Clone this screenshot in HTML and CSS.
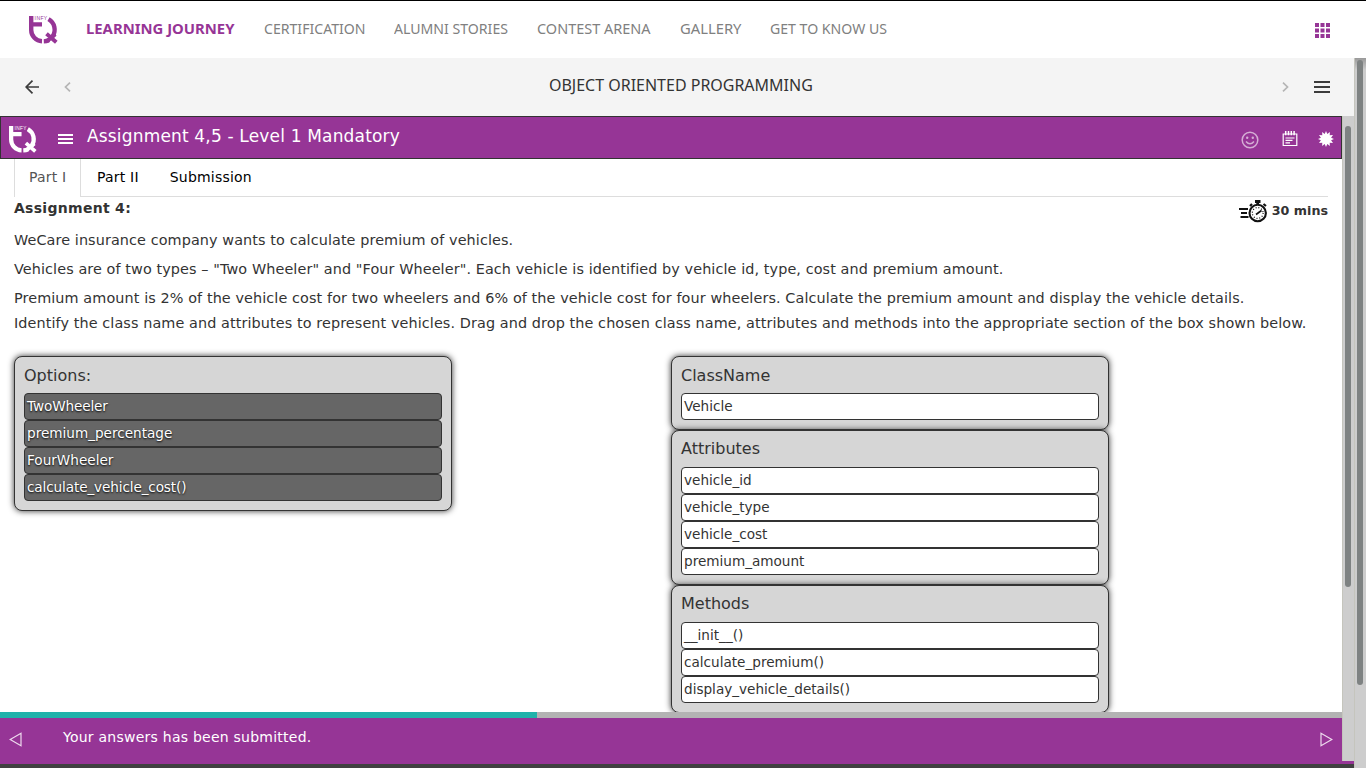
FILE: index.html
```html
<!DOCTYPE html>
<html lang="en">
<head>
<meta charset="utf-8">
<title>Object Oriented Programming</title>
<link rel="stylesheet" href="styles.css">
</head>
<body>
<header class="top">
  <svg class="logo" viewBox="0 0 29 28"><g fill="none" stroke="currentColor"><path d="M2.200 0V14A11.200 11.200 0 0 0 13 25.200M3 8.400H13" stroke-width="4.400"/><path d="M19.500 3.200A12 12 0 0 1 23.500 20.500M20 24Q17.500 25.300 14.800 25.400" stroke-width="4.400"/><path d="M17.500 17.800L27.300 26.300M26.300 18.200L18 25.200" stroke-width="3.900"/></g><text x="5.600" y="4.300" font-size="5" letter-spacing=".4">INFY</text></svg>
  <nav class="nav">
    <a class="active"><span>LEARNING JOURNEY</span></a><a class="n2"><span>CERTIFICATION</span></a><a class="n3"><span>ALUMNI STORIES</span></a><a class="n4"><span>CONTEST ARENA</span></a><a class="n5"><span>GALLERY</span></a><a class="n6"><span>GET TO KNOW US</span></a>
  </nav>
  <svg class="apps" viewBox="0 0 15 15"><path fill="#963596" d="M0 0h4v4H0zM5.500 0h4v4h-4zM11 0h4v4h-4zM0 5.500h4v4H0zM5.500 5.500h4v4h-4zM11 5.500h4v4h-4zM0 11h4v4H0zM5.500 11h4v4h-4zM11 11h4v4h-4z"/></svg>
</header>
<div class="outer">
  <main class="page">
    <div class="course">
      <svg class="back" viewBox="0 0 14 14"><path d="M14 7H1M7.500.7L1.200 7l6.300 6.300" fill="none" stroke="#3c3c3c" stroke-width="1.700"/></svg>
      <svg class="prev" viewBox="0 0 7 10"><path d="M6 .6L1.500 5 6 9.400" fill="none" stroke="#b5b5b5" stroke-width="1.700"/></svg>
      <h1><span>OBJECT ORIENTED PROGRAMMING</span></h1>
      <svg class="next" viewBox="0 0 7 10"><path d="M1 .6L5.500 5 1 9.400" fill="none" stroke="#b5b5b5" stroke-width="1.700"/></svg>
      <svg class="menu" viewBox="0 0 16 12"><path d="M0 1h16M0 6h16M0 11h16" stroke="#3c3c3c" stroke-width="1.800"/></svg>
    </div>
    <div class="frame">
      <div class="lesson">
        <div class="bar">
          <svg class="logo logo2" viewBox="0 0 29 28"><g fill="none" stroke="currentColor"><path d="M2.200 0V14A11.200 11.200 0 0 0 13 25.200M3 8.400H13" stroke-width="4.400"/><path d="M19.500 3.200A12 12 0 0 1 23.500 20.500M20 24Q17.500 25.300 14.800 25.400" stroke-width="4.400"/><path d="M17.500 17.800L27.300 26.300M26.300 18.200L18 25.200" stroke-width="3.900"/></g><text x="5.600" y="4.300" font-size="5" letter-spacing=".4">INFY</text></svg>
          <svg class="burger" viewBox="0 0 15 10"><path d="M0 1h15M0 5h15M0 9h15" stroke="#fff" stroke-width="1.800"/></svg>
          <h2>Assignment 4,5 - Level 1 Mandatory</h2>
          <svg class="smile" viewBox="0 0 18 18"><g fill="none" stroke="#d5aed5" stroke-width="1.500"><circle cx="9" cy="9" r="7.800"/><path d="M5 10.500q4 4.500 8 0"/></g><g fill="#d5aed5"><circle cx="6.200" cy="6.800" r="1.200"/><circle cx="11.800" cy="6.800" r="1.200"/></g></svg>
          <svg class="note" viewBox="0 0 16 16"><path d="M1.200 3h13.600v11.500H1.200zM3.500 7h9M3.500 9.400h7M3.500 11.800h4.500" fill="none" stroke="#fff" stroke-width="1.200"/><path d="M3.700 0v4.300M6.500 0v4.300M9.300 0v4.300M12.100 0v4.300" stroke="#fff" stroke-width="1.500"/></svg>
          <svg class="star" viewBox="0 0 16 16"><path fill="#fff" d="M8 0L9.300 2.900 11.900 1 11.700 4.300 15 4.100 13.100 6.700 16 8 13.100 9.300 15 11.900 11.700 11.700 11.900 15 9.300 13.100 8 16 6.700 13.100 4.100 15 4.300 11.700 1 11.900 2.900 9.300 0 8 2.900 6.700 1 4.100 4.300 4.300 4.100 1 6.700 2.900z"/></svg>
        </div>
        <div class="content">
          <div class="tabs"><a class="on">Part I</a><a>Part II</a><a class="t3">Submission</a></div>
          <div class="heading"><strong>Assignment 4:</strong>
            <div class="time"><svg viewBox="0 0 28 23"><g fill="none" stroke="#111"><path d="M0 9h9M2 13h6M1.500 17h8" stroke-width="1.900"/><circle cx="18.700" cy="13" r="8.200" stroke-width="2.100"/><path d="M16 1.500h5.500M18.700 1v4" stroke-width="2.800"/><path d="M11 6l2-2M24.500 4l2.500 2" stroke-width="2.200"/><circle cx="18.700" cy="13" r="5.400" stroke-width="1.300" stroke-dasharray="1 1.830"/><path d="M17 14.500l5.500-4" stroke-width="1.700"/></g></svg><b>30 mins</b></div>
          </div>
          <p>WeCare insurance company wants to calculate premium of vehicles.</p>
          <p>Vehicles are of two types – "Two Wheeler" and "Four Wheeler". Each vehicle is identified by vehicle id, type, cost and premium amount.</p>
          <p class="tight">Premium amount is 2% of the vehicle cost for two wheelers and 6% of the vehicle cost for four wheelers. Calculate the premium amount and display the vehicle details.</p>
          <p>Identify the class name and attributes to represent vehicles. Drag and drop the chosen class name, attributes and methods into the appropriate section of the box shown below.</p>
          <div class="cols">
            <div class="col">
              <section class="box dark"><h3>Options:</h3><ul><li>TwoWheeler</li><li>premium_percentage</li><li>FourWheeler</li><li>calculate_vehicle_cost()</li></ul></section>
            </div>
            <div class="col">
              <section class="box"><h3>ClassName</h3><ul><li>Vehicle</li></ul></section>
              <section class="box second"><h3>Attributes</h3><ul><li>vehicle_id</li><li>vehicle_type</li><li>vehicle_cost</li><li>premium_amount</li></ul></section>
              <section class="box second"><h3>Methods</h3><ul><li>__init__()</li><li>calculate_premium()</li><li>display_vehicle_details()</li></ul></section>
            </div>
          </div>
        </div>
        <div class="progress"><div style="width:537px"></div></div>
        <footer>
          <svg class="fl" viewBox="0 0 13 15"><path d="M12 1.200v12.600L1.200 7.500z" fill="none" stroke="#edd9ed" stroke-width="1.200"/></svg>
          <span>Your answers has been submitted.</span>
          <svg class="fr" viewBox="0 0 13 15"><path d="M1 1.200v12.600L11.800 7.500z" fill="none" stroke="#edd9ed" stroke-width="1.200"/></svg>
        </footer>
      </div>
      <div class="scroll inner"><div></div></div>
    </div>
    <div class="under"></div>
    <div class="end"></div>
  </main>
  <div class="scroll outerbar"><div></div></div>
</div>
</body>
</html>
```
FILE: styles.css
```css
* { box-sizing: border-box; }
body { margin: 0; width: 1366px; height: 768px; overflow: hidden; background: #fff; color: #333; font-family: "DejaVu Sans", sans-serif; }
svg { flex: none; display: block; }
h1, h2, h3, p, ul { margin: 0; padding: 0; font-weight: 400; }
.top { height: 58px; border-top: 1px solid #000; display: flex; align-items: flex-start; padding-left: 29px; }
.logo { width: 29px; height: 28px; margin-top: 15px; color: #963596; }
.logo text { font-family: "Liberation Sans", sans-serif; fill: currentColor; }
.nav { display: flex; margin-left: 28px; padding-top: 16px; font: 15px/22px "Noto Sans", sans-serif; color: #808080; }
.nav a { white-space: nowrap; width: 178px; }
.nav span, h1 span { display: inline-block; transform-origin: 0 50%; transform: scaleX(.94); }
.nav .active { color: #963596; font-weight: 700; }
.nav .active span { transform: scaleX(.99); }
.nav .n2 { width: 130px; }
.nav .n3 { width: 143px; }
.nav .n4 { width: 143px; }
.nav .n4 span { transform: scaleX(.965); }
.nav .n5 { width: 90px; }
.nav .n5 span { transform: scaleX(.985); }
.nav .n6 { width: 130px; }
.apps { width: 15px; height: 15px; margin: 22px 36px 0 auto; }
.outer { display: flex; height: 710px; }
.page { width: 1354px; }
.course { height: 58px; background: #f4f4f4; display: flex; align-items: flex-start; padding-left: 25px; }
.back { width: 14px; height: 14px; margin-top: 22px; }
.prev, .next { width: 7px; height: 10px; margin-top: 24px; }
.prev { margin-left: 25px; }
h1 { font: 17px/24px "Noto Sans", sans-serif; color: #333; margin: 15px 0 0 478px; width: 264px; white-space: nowrap; }
.next { margin-left: 469px; }
.menu { width: 16px; height: 12px; margin: 23px 0 0 25px; }
.frame { display: flex; height: 645px; }
.lesson { width: 1342px; height: 645px; }
.bar { height: 43px; background: #963596; border: 1px solid #333; display: flex; align-items: flex-start; padding-left: 8px; color: #fff; }
.logo2 { width: 28px; height: 27px; margin-top: 9px; color: #fff; }
.burger { width: 15px; height: 10px; margin: 17px 0 0 21px; }
h2 { font-size: 17px; line-height: 22px; letter-spacing: .17px; margin: 8px 0 0 14px; flex: 1; }
.smile { width: 18px; height: 18px; margin-top: 14px; }
.note { width: 16px; height: 16px; margin: 14px 0 0 23px; }
.star { width: 16px; height: 16px; margin: 14px 7px 0 20px; }
.content { height: 553px; overflow: hidden; padding: 0 14px; background: #fff; }
.tabs { display: flex; height: 38px; border-bottom: 1px solid #ddd; font-size: 14px; line-height: 36px; letter-spacing: .2px; color: #000; white-space: nowrap; }
.tabs a { padding: 0 15px 0 16px; }
.tabs .on { height: 38px; width: 67px; padding: 0 0 0 14px; border: solid #ddd; border-width: 0 1px; background: #fff; color: #555; }
.heading { display: flex; justify-content: space-between; font-size: 14px; line-height: 22px; height: 32px; }
.heading strong { letter-spacing: .29px; }
.time { display: flex; font-size: 12.700px; line-height: 28px; gap: 5px; }
.time svg { width: 28px; height: 23px; margin-top: 3px; }
p { font-size: 14.400px; line-height: 22px; height: 29px; letter-spacing: .095px; white-space: nowrap; }
.tight { height: 25px; }
.cols { display: flex; padding-top: 15px; gap: 219px; }
.col { width: 438px; }
.box { border: 1px solid #333; border-radius: 8px; background: #d6d6d6; padding: 9px; box-shadow: 0 0 6px #333; }
h3 { font-size: 16px; line-height: 19px; height: 27px; }
.second h3 { line-height: 17px; }
ul { list-style: none; }
li { height: 27px; border: 1px solid #333; border-radius: 4px; background: #fff; padding-left: 2px; font-size: 13.600px; line-height: 25px; }
.dark li { background: #666; color: #fff; text-shadow: 0 1px 2px #000; }
.dark li:first-child, .dark li:last-child { letter-spacing: -.12px; }
.progress { height: 6px; background: #b3b3b3; }
.progress div { height: 6px; background: #20b2aa; }
footer { height: 43px; background: #963596; color: #fff; display: flex; align-items: flex-start; padding: 0 9px; font-size: 14px; letter-spacing: .24px; }
footer span { margin: 9px 0 0 41px; line-height: 20px; }
.fl, .fr { width: 13px; height: 15px; margin-top: 14px; }
.fr { margin-left: auto; }
.under { height: 3px; background: #963596; }
.end { height: 4px; background: #404040; }
.scroll { width: 12px; background: #cdcdcd; border-left: 1px solid #c5c5bd; padding-left: 2px; }
.scroll div { width: 6px; border-radius: 3px; background: #7e8282; }
.inner { height: 645px; padding-top: 10px; }
.inner div { height: 461px; }
.outerbar { height: 710px; padding-top: 2px; background: linear-gradient(#999, #cdcdcd 12px); }
.outerbar div { height: 625px; }
```
